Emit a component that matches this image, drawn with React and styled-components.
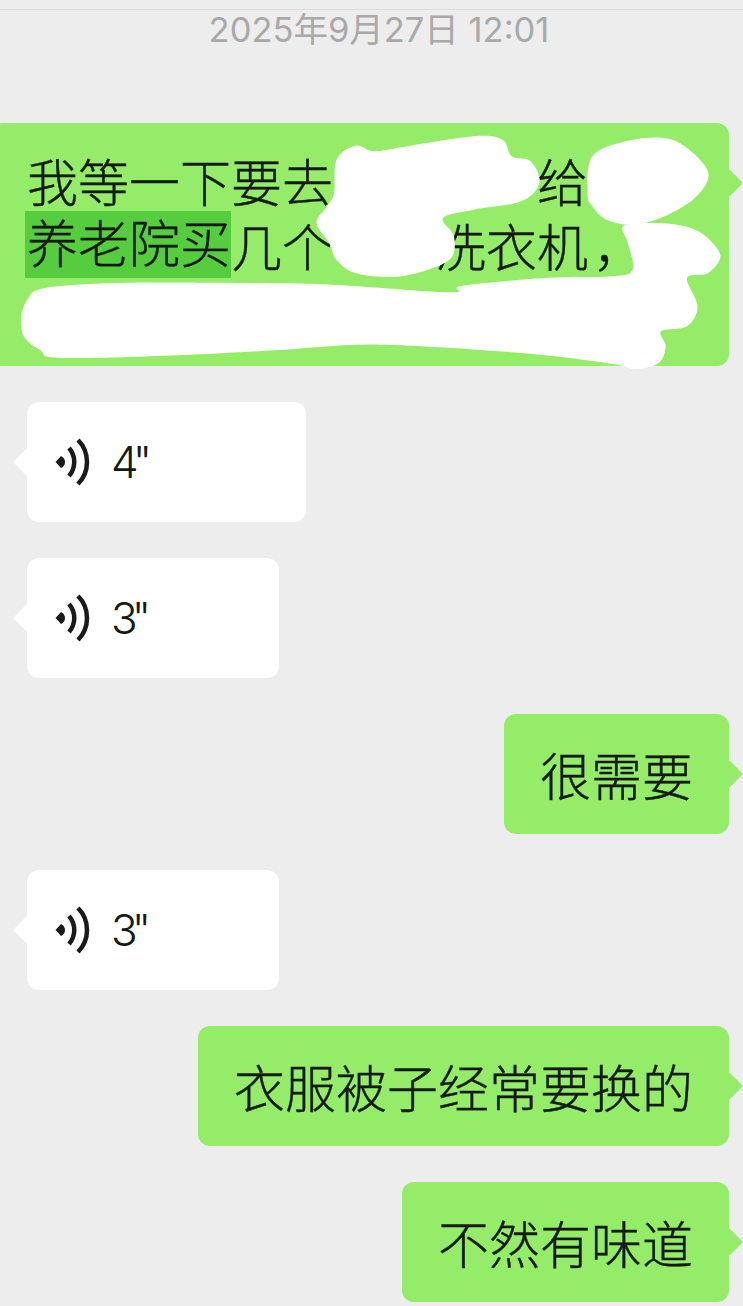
import styled, { createGlobalStyle } from 'styled-components';

const GlobalStyle = createGlobalStyle`
  html, body {
    margin: 0;
    padding: 0;
    background: #ededed;
  }
  #root {
    height: 1306px;
    overflow: hidden;
  }
`;

const Page = styled.div`
  height: 1306px;
  box-sizing: border-box;
  padding-top: 9px;
  background: #ededed;
  overflow: hidden;
  font-family: Inter, 'Noto Sans CJK SC', sans-serif;
  color: #141a12;
`;

const TimeBar = styled.div`
  height: 114px;
  box-sizing: border-box;
  border-top: 1px solid #dcdcdc;
  padding-left: 15px;
  text-align: center;
  font-size: 34.5px;
  line-height: 40px;
  color: #a9a9a9;
`;

const Thread = styled.div`
  display: flex;
  flex-direction: column;
  align-items: flex-start;
  gap: 36px;
  padding: 0 14px 0 27px;
`;

const Bubble = styled.div`
  position: relative;
  flex-shrink: 0;
  box-sizing: border-box;
  width: ${(props) => props.$width}px;
  min-height: 120px;
  padding: 24px 36px;
  border-radius: 12px;
  background: ${(props) => (props.$mine ? '#95ec69' : '#ffffff')};
  align-self: ${(props) => (props.$mine ? 'flex-end' : 'flex-start')};
  display: flex;
  flex-direction: column;
  justify-content: center;

  &::before {
    content: '';
    position: absolute;
    top: 50px;
    ${(props) => (props.$mine ? 'right: -10px;' : 'left: -10px;')}
    width: 20px;
    height: 20px;
    border-radius: 3px;
    background: inherit;
    transform: rotate(45deg);
  }
`;

const Line = styled.div`
  display: flex;
  align-items: center;
  height: 65px;
  font-size: 51px;
  font-weight: 300;
  -webkit-text-stroke: 0.4px #141a12;
  white-space: nowrap;
`;

const Marked = styled.span`
  display: block;
  height: 67px;
  margin-left: -2px;
  padding-left: 2px;
  line-height: 67px;
  background: #55cd3f;
`;

const Gap = styled.span`
  display: block;
  width: ${(props) => props.$width}px;
`;

const Comma = styled.span`
  margin-left: 5px;
`;

const Scribble = styled.svg`
  position: absolute;
  top: 0;
  left: 9px;
  width: 743px;
  height: 243px;
  overflow: visible;
`;

const Voice = styled.div`
  display: flex;
  align-items: center;
  gap: 21px;
  margin-left: -9px;
  font-size: 44px;
  font-weight: 300;
`;

const Seconds = styled.span`
  letter-spacing: -6px;
`;

// catmull-rom through the points, closed
const blob = (pts) => {
  const n = pts.length;
  let d = `M${pts[0][0]} ${pts[0][1]}`;
  for (let i = 0; i < n; i++) {
    const p0 = pts[(i - 1 + n) % n];
    const p1 = pts[i];
    const p2 = pts[(i + 1) % n];
    const p3 = pts[(i + 2) % n];
    const c1 = [p1[0] + (p2[0] - p0[0]) / 6, p1[1] + (p2[1] - p0[1]) / 6];
    const c2 = [p2[0] - (p3[0] - p1[0]) / 6, p2[1] - (p3[1] - p1[1]) / 6];
    d += ` C${c1[0]} ${c1[1]} ${c2[0]} ${c2[1]} ${p2[0]} ${p2[1]}`;
  }
  return d + 'Z';
};

const blobs = [
  [[705, 250], [710, 150], [750, 108], [790, 125], [850, 112], [1000, 80], [1060, 90], [1080, 140], [1120, 155], [1138, 220], [1100, 275], [1000, 300], [935, 325], [958, 380], [952, 445], [900, 482], [830, 502], [750, 490], [710, 450], [695, 400], [668, 340], [690, 290]],
  [[1240, 250], [1250, 140], [1320, 95], [1400, 85], [1450, 115], [1495, 190], [1470, 260], [1410, 315], [1340, 345], [1280, 330], [1250, 290]],
  [[1325, 400], [1315, 350], [1370, 340], [1430, 345], [1480, 370], [1520, 435], [1495, 490], [1450, 505], [1472, 590], [1450, 650], [1395, 665], [1405, 710], [1390, 760], [1340, 778], [1290, 762], [1100, 730], [800, 705], [600, 720], [400, 735], [130, 745], [85, 722], [50, 680], [45, 620], [60, 565], [95, 535], [250, 520], [500, 520], [700, 525], [950, 548], [975, 528], [1150, 505], [1290, 500], [1335, 480]],
];

const VoiceIcon = () => (
  <svg width="36" height="48" viewBox="0 0 36 48" fill="none" stroke="#1a1a1a" strokeWidth="4.5">
    <path d="M1.5 24 L7 18 Q11 20 11 24 Q11 28 7 30 Z" fill="#1a1a1a" stroke="none" />
    <path d="M15 10 C22 18 22 30 15 38" />
    <path d="M24 2 C36 14 36 34 24 46" />
  </svg>
);

const VoiceBubble = ({ width, seconds }) => (
  <Bubble $width={width}>
    <Voice>
      <VoiceIcon />
      <Seconds>{seconds}"</Seconds>
    </Voice>
  </Bubble>
);

const App = () => (
  <>
    <GlobalStyle />
    <Page>
      <TimeBar>2025年9月27日 12:01</TimeBar>
      <Thread>
        <Bubble $mine $width={738}>
          <Line>
            我等一下要去
            <Gap $width={204} />
            给
          </Line>
          <Line>
            <Marked>养老院买</Marked>
            几个
            <Gap $width={102} />
            洗衣机
            <Comma>，</Comma>
          </Line>
          <Line />
          <Scribble viewBox="0 40 1568 729" preserveAspectRatio="none">
            {blobs.map((pts, i) => (
              <path key={i} d={blob(pts)} fill="#ffffff" />
            ))}
          </Scribble>
        </Bubble>
        <VoiceBubble width={279} seconds={4} />
        <VoiceBubble width={252} seconds={3} />
        <Bubble $mine $width={225}>
          <Line>很需要</Line>
        </Bubble>
        <VoiceBubble width={252} seconds={3} />
        <Bubble $mine $width={531}>
          <Line>衣服被子经常要换的</Line>
        </Bubble>
        <Bubble $mine $width={327}>
          <Line>不然有味道</Line>
        </Bubble>
      </Thread>
    </Page>
  </>
);

export default App;
